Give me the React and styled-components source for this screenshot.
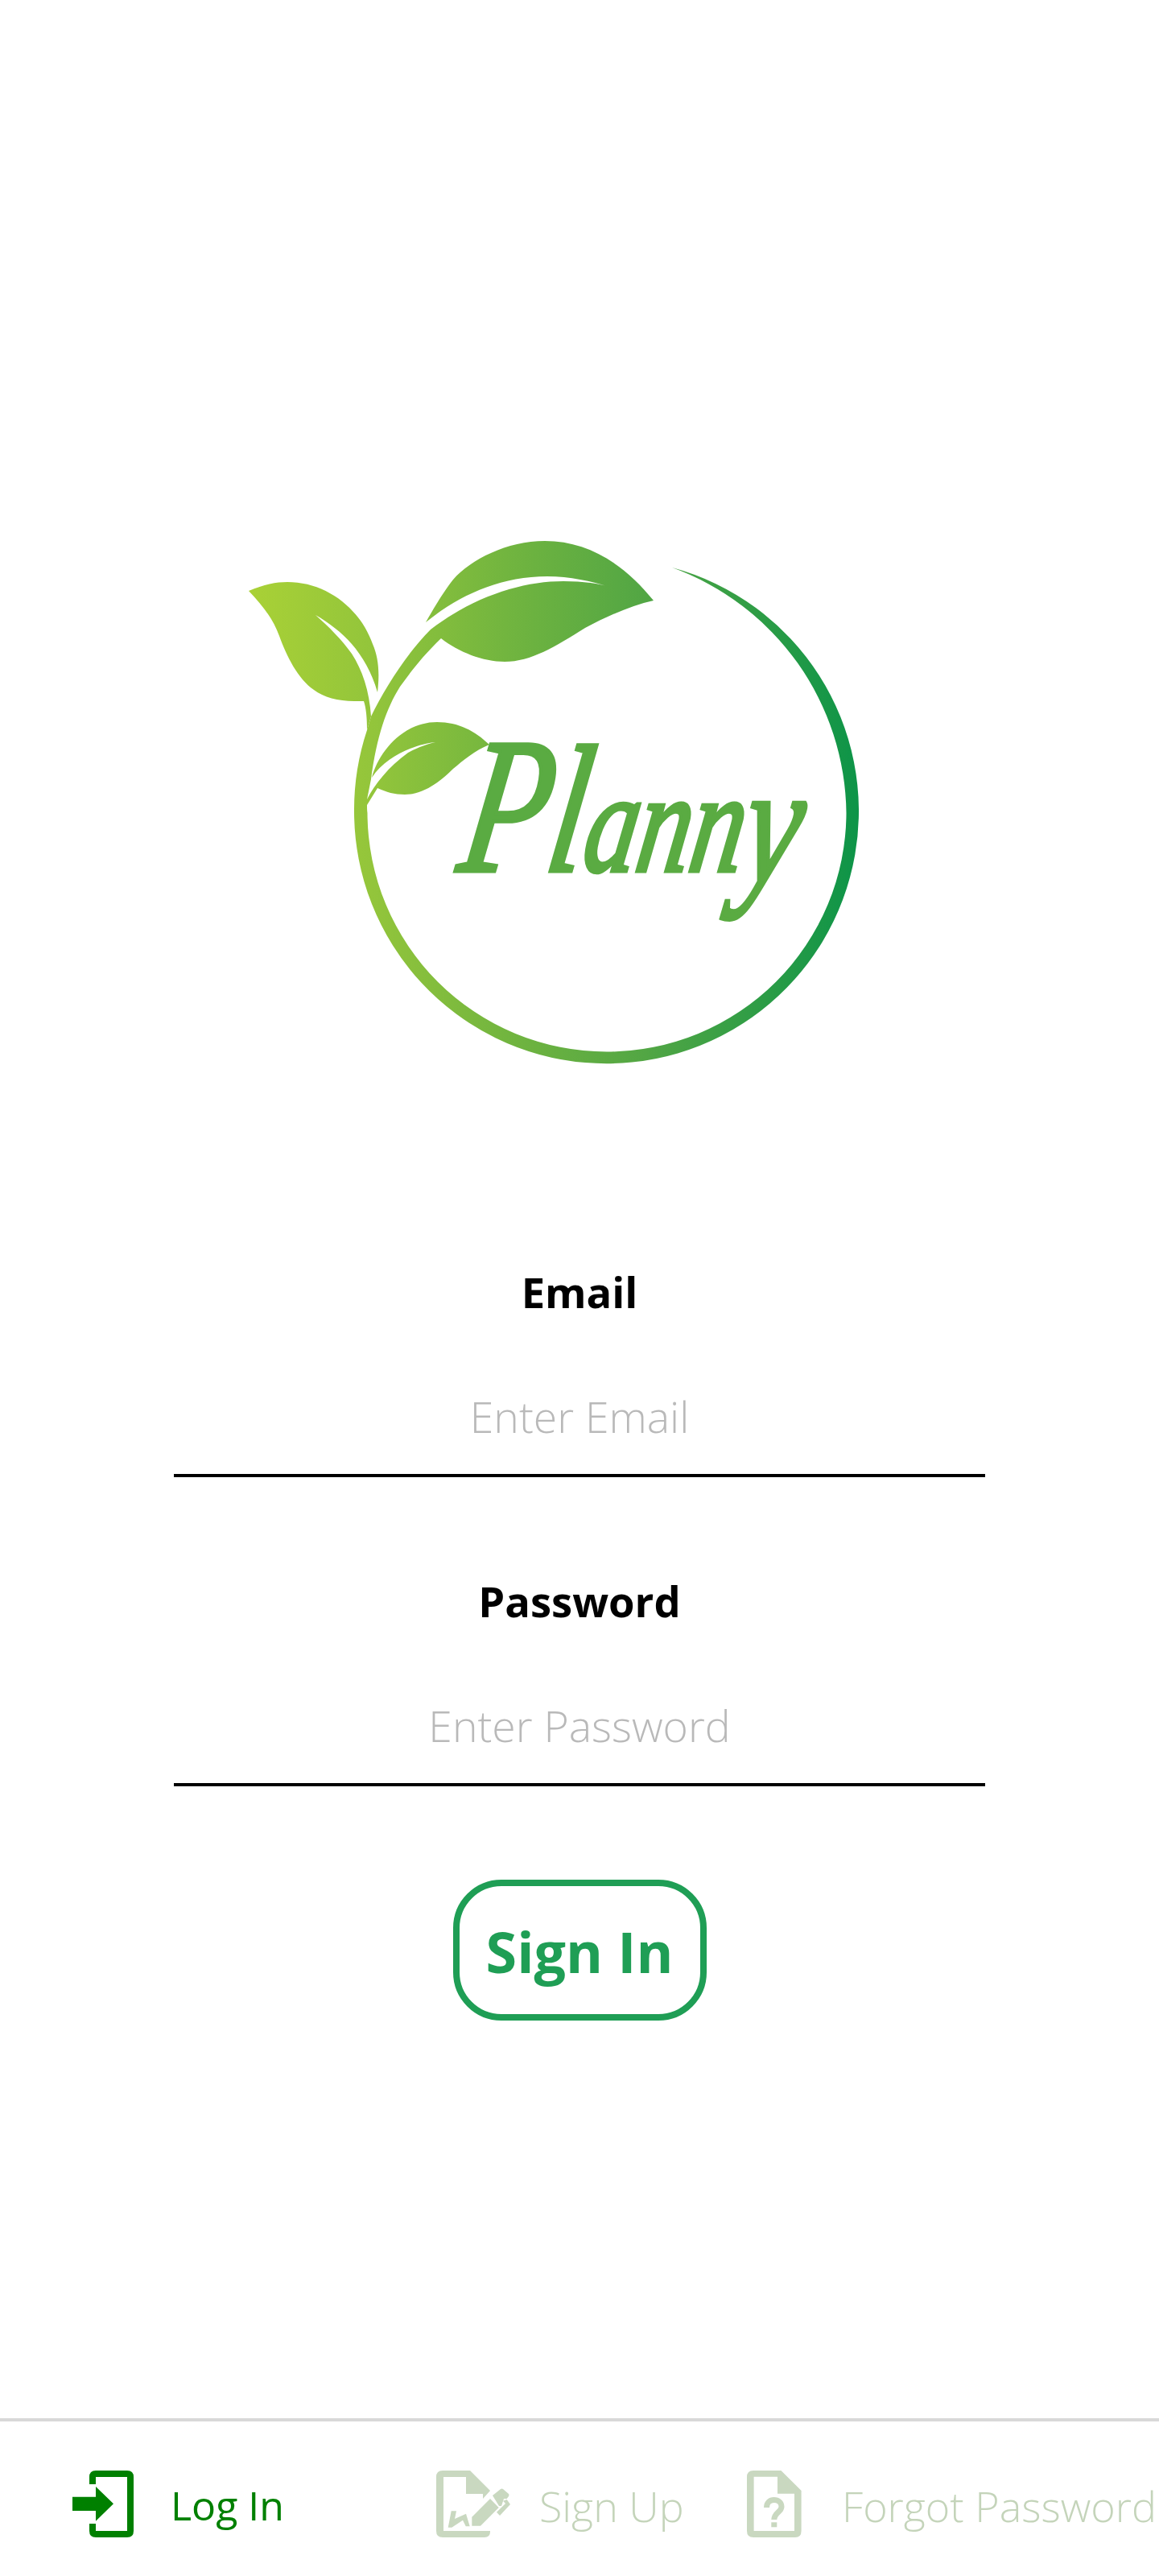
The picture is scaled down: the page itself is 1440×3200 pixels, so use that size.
import React from "react";
import styled, { createGlobalStyle } from "styled-components";

const Global = createGlobalStyle`
  html, body { margin: 0; padding: 0; background: #fff; }
  * { box-sizing: border-box; }
`;

const FONT = `"Open Sans", "Noto Sans", "Liberation Sans", sans-serif`;

const Page = styled.div`
  width: 1440px;
  height: 3200px;
  display: flex;
  flex-direction: column;
  align-items: center;
  font-family: ${FONT};
  background: #fff;
  overflow: hidden;
`;

const LogoWrap = styled.svg`
  display: block;
  width: 840px;
  height: 670px;
  margin-top: 660px;
  flex: none;
`;

const Form = styled.form`
  width: 1008px;
  margin-top: 245px;
  display: flex;
  flex-direction: column;
  align-items: center;
  gap: 124px;
`;

const Field = styled.div`
  width: 100%;
  display: flex;
  flex-direction: column;
  align-items: center;
  gap: 66px;
`;

const Label = styled.label`
  font-size: 52.5px;
  line-height: 60px;
  font-weight: 700;
  color: #000;
`;

const Input = styled.input`
  width: 100%;
  height: 134px;
  padding: 0 0 14px;
  border: 0;
  border-bottom: 4px solid #000;
  outline: none;
  background: transparent;
  font-family: ${FONT};
  font-size: 53.5px;
  font-weight: 300;
  text-align: center;
  color: #000;
  &::placeholder { color: #b9b9b9; opacity: 1; }
`;

const SignInButton = styled.button`
  width: 315px;
  height: 175px;
  margin-top: 116px;
  border: 8px solid #1f9e55;
  border-radius: 60px;
  background: #fff;
  color: #1f9e55;
  font-family: ${FONT};
  font-size: 70px;
  font-weight: 700;
  line-height: 1;
  padding: 2px 0 0;
  flex: none;
`;

const TabBar = styled.nav`
  width: 100%;
  margin-top: auto;
  height: 196px;
  border-top: 4px solid #d8d8d8;
  padding: 61px 0 0 90px;
  display: grid;
  grid-template-columns: 452px 386px 1fr;
  align-items: start;
  flex: none;
`;

const Tab = styled.a`
  display: flex;
  align-items: center;
  gap: ${(p) => p.$gap}px;
  height: 83px;
  color: ${(p) => (p.$active ? "#008000" : "#c4d4ba")};
  font-size: ${(p) => (p.$active ? 50 : 52)}px;
  font-weight: ${(p) => (p.$active ? 400 : 300)};
  white-space: nowrap;
`;

const TabIcon = styled.svg`
  display: block;
  flex: none;
  height: 83px;
  width: ${(p) => p.$w}px;
  fill: ${(p) => p.$fill || "currentColor"};
`;

const TabLabel = styled.span`
  line-height: 83px;
  position: relative;
  top: 2px;
`;

function Logo() {
  return (
    <LogoWrap viewBox="300 660 840 670" aria-label="Planny logo">
      <defs>
        <linearGradient id="leafGrad" gradientUnits="userSpaceOnUse" x1="310" y1="0" x2="1067" y2="0">
          <stop offset="0" stopColor="#a9d136" />
          <stop offset="0.2" stopColor="#93c53b" />
          <stop offset="0.42" stopColor="#72b53f" />
          <stop offset="0.65" stopColor="#52a644" />
          <stop offset="0.85" stopColor="#2b9c46" />
          <stop offset="1" stopColor="#0d9448" />
        </linearGradient>
      </defs>
      {/* left leaf with its stalk */}
      <path
        fill="url(#leafGrad)"
        d="M309 734 C328 726 343 723 357 723 C405 723 447 755 463 800 C470 816 472 835 469 860
           C462 835 450 815 437 800 C425 786 408 773 392 764 C408 778 425 795 437 812
           C450 832 459 858 461 890 L456 907 C456 892 455 880 452 871 C448 871 444 871 440 871
           C420 871 402 866 390 857 C370 843 356 815 347 790 C339 768 326 752 309 734 Z"
      />
      {/* ring, main stalk, top leaf and small leaf */}
      <path
        fill="url(#leafGrad)"
        d="M835 705 A313.5 313.5 0 1 1 440 1009.5 A313.5 313.5 0 0 1 456 907 L461 890
           C478 855 505 812 535 782 C590 740 650 722 700 722 C725 722 745 725 757 729
           C735 722 708 716 680 716 C620 716 570 740 529 773 C545 745 555 730 563 720
           C585 695 630 672 677 672 C730 672 775 700 812 746 C785 752 755 765 727 780
           C690 803 660 822 627 822 C600 822 570 810 548 793 C525 815 510 835 497 853
           C480 880 468 915 461 968 L456 993 C465 975 483 952 507 935 C520 928 532 924 541 922
           C525 923 482 935 462 966 C470 935 500 897 543 897 C570 897 590 908 608 925
           C590 932 575 945 563 955 C550 968 528 987 503 987 C490 987 480 984 469 979 L456 1000
           C456 1003 456 1006 456.5 1010 A297.5 297.5 0 0 0 754 1306.5 A297.5 297.5 0 0 0 1051.5 1010
           A328 328 0 0 0 835 705 Z"
      />
      <text
        transform="translate(566 1082) skewX(-9) scale(0.74 1)"
        fontFamily="'Liberation Serif', serif"
        fontStyle="italic"
        fill="#5aab42"
        stroke="#5aab42"
        strokeWidth="5"
      >
        <tspan fontSize="240">P</tspan>
        <tspan fontSize="225">l</tspan>
        <tspan fontSize="178">ann</tspan>
        <tspan fontSize="215" dy="14">y</tspan>
      </text>
    </LogoWrap>
  );
}

const LogInIcon = () => (
  <TabIcon $w={76} viewBox="0 0 76 83">
    <path
      fillRule="evenodd"
      d="M21 17 V8 Q21 0 29 0 H68 Q76 0 76 8 V75 Q76 83 68 83 H29 Q21 83 21 75 V66 H29 V75 H68 V8 H29 V17 Z"
    />
    <path d="M0 32.7 H29 V20 L51 41.3 L29 62.7 V50 H0 Z" />
  </TabIcon>
);

const SignUpIcon = () => (
  <TabIcon $w={92} $fill="#c9d8c0" viewBox="0 0 92 83">
    <path d="M8 0 H42 L67 25 L58 35 V29 H37 V8 H9 V75 H67 V76 Q67 83 60 83 H8 Q0 83 0 75 V8 Q0 0 8 0 Z" />
    <path d="M14.7 70.7 L18.7 50.3 H25 L23 60 L37 53.7 L41.7 69.3 H36.7 L33 61.7 L19.3 70.7 Z" />
    <path d="M44.3 57.7 L67 35 L77.7 46 L55 68.7 H44.3 Z" />
    <path d="M70 31 L80 23 Q81.7 22 83 23 L90 29 Q91 30 90 32 L87.7 35 H84 L81 44 L78 44 Z" />
    <path d="M87.7 36 L92 42 L79 56 L75 51.7 L86 41 L83 37.7 Z" />
  </TabIcon>
);

const ForgotIcon = () => (
  <TabIcon $w={68} $fill="#c9d8c0" viewBox="0 0 68 83">
    <path
      fillRule="evenodd"
      d="M8 0 H42.4 L67.6 25 V75 Q67.6 83 60 83 H8 Q0 83 0 75 V8 Q0 0 8 0 Z M8.6 7.7 V75 H59 V28.7 H38 V7.7 Z"
    />
    <path
      fill="none"
      stroke="#c9d8c0"
      strokeWidth="7"
      d="M24.5 46 C24.5 39.5 29 36.5 33.5 36.5 C39 36.5 43 40 43 45 C43 51.5 34 52 33.8 61"
    />
    <rect x="30.3" y="64.3" width="7" height="6" />
  </TabIcon>
);

export default function App() {
  return (
    <Page>
      <Global />
      <Logo />
      <Form onSubmit={(e) => e.preventDefault()}>
        <Field>
          <Label htmlFor="email">Email</Label>
          <Input id="email" placeholder="Enter Email" />
        </Field>
        <Field>
          <Label htmlFor="password">Password</Label>
          <Input id="password" type="password" placeholder="Enter Password" />
        </Field>
      </Form>
      <SignInButton>Sign In</SignInButton>
      <TabBar>
        <Tab $active $gap={46}>
          <LogInIcon />
          <TabLabel>Log In</TabLabel>
        </Tab>
        <Tab $gap={36}>
          <SignUpIcon />
          <TabLabel>Sign Up</TabLabel>
        </Tab>
        <Tab $gap={50}>
          <ForgotIcon />
          <TabLabel>Forgot Password</TabLabel>
        </Tab>
      </TabBar>
    </Page>
  );
}
